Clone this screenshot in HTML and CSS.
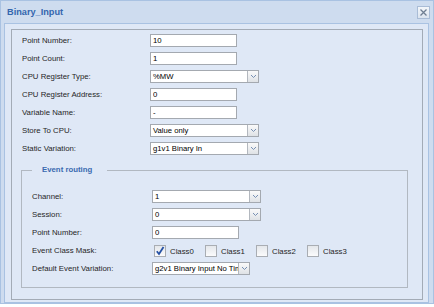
FILE: index.html
```html
<!DOCTYPE html>
<html>
<head>
<meta charset="utf-8">
<link rel="stylesheet" href="styles.css">
</head>
<body>
<div class="window">
  <div class="header">
    <span class="title">Binary_Input</span>
    <span class="close"><svg width="9" height="9" viewBox="0 0 9 9"><path d="M1.5 1.5 L7.5 7.5 M7.5 1.5 L1.5 7.5" stroke="#6f7e92" stroke-width="1.3" fill="none"/></svg></span>
  </div>
  <div class="body">
    <div class="panel">
      <div class="row"><span class="lbl">Point Number:</span><input class="txt" value="10"></div>
      <div class="row"><span class="lbl">Point Count:</span><input class="txt" value="1"></div>
      <div class="row"><span class="lbl">CPU Register Type:</span><div class="combo"><span class="val">%MW</span><span class="trig"><svg width="7" height="5" viewBox="0 0 7 5"><path d="M1 1 L3.5 3.5 L6 1" stroke="#7790b4" stroke-width="1" fill="none"/></svg></span></div></div>
      <div class="row"><span class="lbl">CPU Register Address:</span><input class="txt" value="0"></div>
      <div class="row"><span class="lbl">Variable Name:</span><input class="txt" value="-"></div>
      <div class="row"><span class="lbl">Store To CPU:</span><div class="combo"><span class="val">Value only</span><span class="trig"><svg width="7" height="5" viewBox="0 0 7 5"><path d="M1 1 L3.5 3.5 L6 1" stroke="#7790b4" stroke-width="1" fill="none"/></svg></span></div></div>
      <div class="row"><span class="lbl">Static Variation:</span><div class="combo"><span class="val">g1v1 Binary In</span><span class="trig"><svg width="7" height="5" viewBox="0 0 7 5"><path d="M1 1 L3.5 3.5 L6 1" stroke="#7790b4" stroke-width="1" fill="none"/></svg></span></div></div>
      <fieldset class="fs">
        <legend class="legend">Event routing</legend>
        <div class="frow"><span class="flbl">Channel:</span><div class="combo"><span class="val">1</span><span class="trig"><svg width="7" height="5" viewBox="0 0 7 5"><path d="M1 1 L3.5 3.5 L6 1" stroke="#7790b4" stroke-width="1" fill="none"/></svg></span></div></div>
        <div class="frow"><span class="flbl">Session:</span><div class="combo"><span class="val">0</span><span class="trig"><svg width="7" height="5" viewBox="0 0 7 5"><path d="M1 1 L3.5 3.5 L6 1" stroke="#7790b4" stroke-width="1" fill="none"/></svg></span></div></div>
        <div class="frow"><span class="flbl">Point Number:</span><input class="txt" value="0"></div>
        <div class="frow"><span class="flbl">Event Class Mask:</span>
          <div class="checks">
            <span class="cb"><span class="box"><svg width="10" height="10" viewBox="0 0 10 10"><path d="M1.8 5.2 L4 8 L8.5 1" stroke="#2450a4" stroke-width="1.8" fill="none"/></svg></span><span class="cbl">Class0</span></span>
            <span class="cb"><span class="box"></span><span class="cbl">Class1</span></span>
            <span class="cb"><span class="box"></span><span class="cbl">Class2</span></span>
            <span class="cb"><span class="box"></span><span class="cbl">Class3</span></span>
          </div>
        </div>
        <div class="frow"><span class="flbl">Default Event Variation:</span><div class="combo narrow"><span class="val">g2v1 Binary Input No Time</span><span class="trig"><svg width="7" height="5" viewBox="0 0 7 5"><path d="M1 1 L3.5 3.5 L6 1" stroke="#7790b4" stroke-width="1" fill="none"/></svg></span></div></div>
      </fieldset>
    </div>
  </div>
</div>
</body>
</html>
```
FILE: styles.css
```css
body {
  margin: 0;
  background: #fff;
  font-family: "Liberation Sans", Arial, sans-serif;
}
.window {
  width: 434px;
  height: 304px;
  box-sizing: border-box;
  border: 1px solid #a9c2e2;
  background: #cedcef;
  padding: 0 4px 0 3px;
  display: flex;
  flex-direction: column;
}
.header {
  height: 22px;
  flex: none;
  display: flex;
  align-items: center;
  padding-left: 3px;
}
.title {
  font-weight: bold;
  font-size: 9.2px;
  color: #3466ae;
}
.close {
  margin-left: auto;
  margin-right: -1px;
  width: 13px;
  height: 13px;
  box-sizing: border-box;
  border: 1px solid #a9bcd6;
  background: linear-gradient(#f3f6fa, #dbe4ef);
  display: flex;
  align-items: center;
  justify-content: center;
}
.body {
  height: 280px;
  flex: none;
  box-sizing: border-box;
  border: 1px solid #a9c2e2;
  background: #dfe8f6;
  padding: 5px 5px 2px 6px;
}
.panel {
  height: 271px;
  box-sizing: border-box;
  border: 1px solid #a3abb6;
  background: #dfe8f6;
  padding: 2px 0 0 0;
}
.row, .frow {
  display: flex;
  align-items: flex-start;
  height: 18px;
  box-sizing: border-box;
  padding-top: 2px;
}
.row { padding-left: 10px; }
.lbl, .flbl {
  font-size: 7.8px;
  line-height: 13px;
  color: #262626;
  flex: none;
}
.lbl { width: 128px; }
.flbl { width: 120px; }
.txt {
  width: 87px;
  height: 13px;
  box-sizing: border-box;
  margin: 0;
  border: 1px solid #a4a9b0;
  padding: 0 2px;
  font-family: "Liberation Sans", Arial, sans-serif;
  font-size: 7.8px;
  color: #000;
  background: #fff;
  outline: none;
}
.combo {
  display: flex;
  width: 109px;
  height: 13px;
  box-sizing: border-box;
  border: 1px solid #a4a9b0;
  background: #fff;
}
.combo.narrow { width: 98px; }
.val {
  flex: 1;
  min-width: 0;
  padding-left: 2px;
  font-size: 7.7px;
  line-height: 11px;
  color: #000;
  white-space: nowrap;
  overflow: hidden;
}
.trig {
  width: 11px;
  flex: none;
  box-sizing: border-box;
  border-left: 1px solid #b3b8bf;
  background: linear-gradient(#fafafa, #dfe2e6);
  display: flex;
  align-items: center;
  justify-content: center;
}
.fs {
  margin: 6px 0 0 9px;
  width: 387px;
  box-sizing: border-box;
  border: 1px solid #b1b8c1;
  padding: 12px 0 9px 10px;
  min-width: 0;
}
.legend {
  padding: 0 15px 0 10px;
  font-size: 7.8px;
  line-height: 12px;
  font-weight: bold;
  color: #3a6ab0;
}
.checks {
  display: flex;
  padding-left: 2px;
}
.cb {
  display: flex;
  align-items: center;
  width: 51px;
  margin-top: 1px;
}
.box {
  width: 12px;
  height: 12px;
  box-sizing: border-box;
  border: 1px solid #a9adb3;
  background: linear-gradient(#e4e7eb, #fbfbfc);
  display: flex;
  align-items: center;
  justify-content: center;
}
.cbl {
  margin-left: 4px;
  font-size: 7.8px;
  color: #262626;
}
```
